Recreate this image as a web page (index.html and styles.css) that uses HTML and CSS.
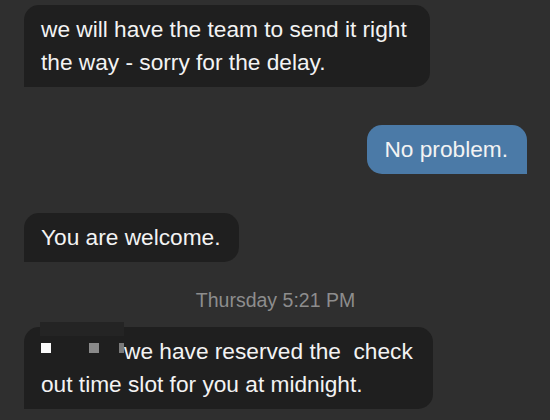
FILE: index.html
```html
<!DOCTYPE html>
<html>
<head>
<meta charset="utf-8">
<link rel="stylesheet" href="styles.css">
</head>
<body>
<div class="thread">
  <div class="bubble in">we will have the team to send it right<br>the way - sorry for the delay.</div>
  <div class="bubble out">No problem.</div>
  <div class="bubble in">You are welcome.</div>
  <div class="stamp">Thursday 5:21 PM</div>
  <div class="bubble in redacted">
    <span class="patch"></span><span class="sq white"></span><span class="sq gray"></span><span class="sq sliver"></span>we have reserved the&nbsp; check<br>out time slot for you at midnight.
  </div>
</div>
</body>
</html>
```
FILE: styles.css
```css
html, body {
  margin: 0;
  padding: 0;
  background: #2f2f2f;
}
body {
  width: 550px;
  height: 420px;
  overflow: hidden;
  font-family: "Liberation Sans", Arial, sans-serif;
}
.thread {
  display: flex;
  flex-direction: column;
  padding: 5px 23px 0 24px;
}
.bubble {
  font-size: 22.7px;
  line-height: 33px;
  color: #f3f3f3;
  padding: 8px 23px 8px 17px;
  border-radius: 15px;
  white-space: nowrap;
}
.in {
  align-self: flex-start;
  background: #1f1f1f;
  border-bottom-left-radius: 0;
}
.out {
  align-self: flex-end;
  background: #4b7aa7;
  border-bottom-right-radius: 0;
  padding-right: 19px;
  margin-top: 38px;
}
.out + .in {
  margin-top: 39px;
  padding-right: 18px;
}
.stamp {
  align-self: center;
  font-size: 19.5px;
  line-height: 24px;
  color: #8d8d8d;
  margin: 26px 0 15px;
}
.redacted {
  position: relative;
  padding-right: 20px;
}
.patch {
  position: absolute;
  left: 16px;
  top: -5px;
  width: 84px;
  height: 14px;
  background: #242424;
}
.sq {
  position: relative;
  display: inline-block;
  width: 10px;
  height: 10px;
  vertical-align: 6px;
}
.white {
  background: #fafafa;
}
.gray {
  background: #8a8a8a;
  margin-left: 38px;
}
.sliver {
  background: #7a7a7a;
  width: 5px;
  margin-left: 20px;
}
```
